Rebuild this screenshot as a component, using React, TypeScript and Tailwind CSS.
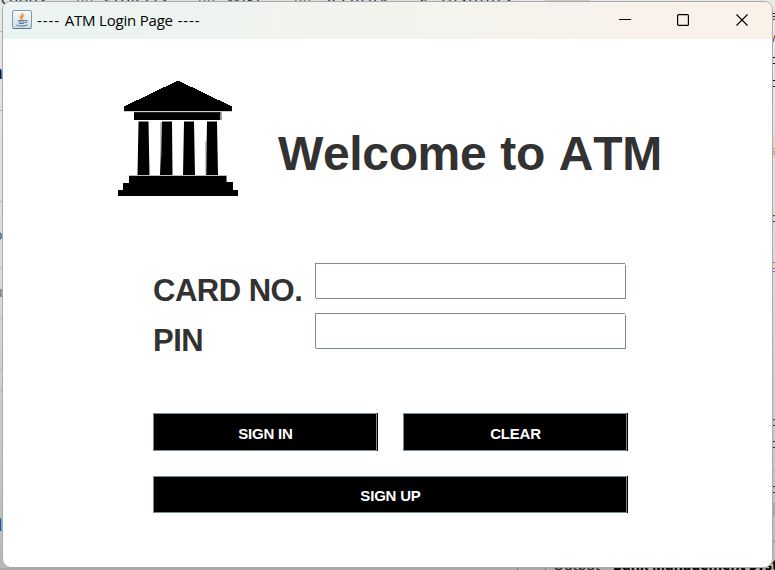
import type { ReactNode } from 'react';

function JavaIcon() {
  return (
    <svg width="20" height="20" viewBox="0 0 20 20" fill="none" className="shrink-0">
      <defs>
        <linearGradient id="tile" x1="0" y1="0" x2="0" y2="1">
          <stop offset="0" stopColor="#fbfcfc" />
          <stop offset="1" stopColor="#cfdae2" />
        </linearGradient>
      </defs>
      <rect x="0.5" y="0.5" width="19" height="18" rx="1.5" fill="url(#tile)" stroke="#7f99ae" />
      <path d="M1 18.5h18" stroke="#58788f" />
      <path d="M10.5 3c1 2-3 3-2 5 .3.7 1 1 1 1.500M12 5.500c-2 1-2.500 2-1.500 3.500" stroke="#ee8f45" strokeWidth="1.500" />
      <path d="M6 10.500h7M6.500 12h6M7 13.500h5M13 10.500c3-.5 2.500 2-.5 2.500M4.500 15c2 1.300 8.500 1.300 11 0" stroke="#5e829f" strokeWidth="1.100" />
    </svg>
  );
}

function BankIcon() {
  return (
    <svg width="120" height="115" viewBox="0 0 120 115" fill="#000">
      <path d="M59 0 6 25.500V30h108v-4.500L61 0Z" shapeRendering="crispEdges" />
      <path d="M6 30h108v.6H6z" fill="#999" />
      <path d="M16 31h87v2H16z" fill="#222" />
      <path d="M16 32h86v7H16z" />
      <path d="M102 31.500h2v7.500h-2z" fill="#999" />
      <path d="M20.500 40.500h10l1 53.500h-12zM44 40.500h10l.5 53.500H42zM66 40.500h10l1 53.500H65zM89 40.500h10l1 53.500H88z" />
      <path d="M42.500 41h1v35h-1zM87.500 60h1v33h-1z" fill="#888" />
      <path d="M11 94h98v1H11z" fill="#bbb" />
      <path d="M11 95h98v6h6v8h5v6H0v-6h5v-7h6z" />
      <path d="M108 95h1v6h-1z" fill="#777" />
    </svg>
  );
}

function Field({ label, type }: { label: string; type: string }) {
  return (
    <label className="flex h-9">
      <span className="w-[162px] pt-2.5 text-[31px] leading-[35px] font-bold tracking-[-0.5px] whitespace-nowrap [font-kerning:none]">{label}</span>
      <span className="relative block h-9 w-[311px]">
        <input type={type} className="block h-9 w-[311px] border border-[#7a8a99] bg-white outline-none" />
        <i className="absolute bottom-0 left-0 h-px w-px bg-[#eef0f2]" />
        <i className="absolute top-0 right-0 h-0.5 w-px bg-[#eef0f2]" />
      </span>
    </label>
  );
}

function Button({ className, label, children }: { className: string; label: string; children: ReactNode }) {
  return (
    <button className={`block border-r border-black bg-black ${className}`}>
      <span className={`flex h-full items-center justify-center border border-[#7a8a99] pl-px text-[15px] leading-4 font-bold tracking-[-0.2px] text-white [font-kerning:none] ${label}`}>
        {children}
      </span>
    </button>
  );
}

const topTabs = [
  { text: 'ctions', x: 'left-[1px]' },
  { text: '▯▯  Projects', x: 'left-[76px]' },
  { text: '▯▯  Wiki', x: 'left-[198px]' },
  { text: '▯▯  Security', x: 'left-[294px]' },
  { text: '⌁  Insights', x: 'left-[418px]' },
];

const tabSpacing = ['tracking-[0.5px]', 'tracking-[1px]', 'tracking-[1.2px]', 'tracking-[1.2px]', 'tracking-[2px]'];

const leftEdge = [
  { text: 'n', x: 'left-[-10px] top-[58px] text-[20px] leading-7 font-bold text-[#171a3a]' },
  { text: 'o', x: 'left-[-6px] top-[227px] text-[14px] leading-4 text-[#44566b]' },
  { text: 'u', x: 'left-[-6px] top-[284px] text-[14px] leading-4 text-[#7b6b72]' },
  { text: 'n', x: 'left-[-14px] top-[507px] text-[26px] leading-7 font-bold text-[#1d4f9f]' },
];

const rightEdge = [
  { text: 'a', x: 'top-[5px] text-[#252432]' },
  { text: 'w', x: 'top-[27px] text-[#58423a]' },
  { text: 'c', x: 'top-[49px] text-[#111]' },
  { text: 'c', x: 'top-[72px] text-[#111]' },
  { text: 's', x: 'top-[140px] text-[#b5a37a]' },
  { text: 'o', x: 'top-[207px] text-[#4a3828]' },
  { text: 'g', x: 'top-[254px] text-[#c252b9]' },
  { text: 'i', x: 'top-[298px] text-[#2b78b5] underline' },
  { text: 'l', x: 'top-[365px] text-[#2b78b5] underline' },
  { text: 'o', x: 'top-[411px] text-[#4a3828]' },
  { text: 'c', x: 'top-[433px] text-[#333]' },
  { text: 'i', x: 'top-[455px] text-[#2b78b5] underline' },
  { text: 'c', x: 'top-[478px] text-[#333]' },
];

const rules = ['top-[31px]', 'top-[110px]', 'top-[201px]', 'top-[267px]', 'top-[318px]', 'top-[369px]', 'top-[390px]', 'top-[450px]', 'top-[554px]'];

function Desktop() {
  return (
    <div className="absolute inset-0 overflow-hidden bg-linear-to-b from-[#e8e8e8] via-[#dadada] to-[#b9b9b9]" aria-hidden="true">
      <div className="absolute top-0 left-0 h-1 w-[517px] bg-[#dce0df]" />
      <div className="absolute top-0 left-[545px] h-1 w-[45px] bg-[#cbcbc3]" />
      {topTabs.map((t, i) => (
        <span key={t.text} className={`absolute top-[-10px] text-[15px] leading-4 whitespace-pre text-[#1f2938] ${t.x} ${tabSpacing[i]}`}>{t.text}</span>
      ))}
      {rules.map((r) => <i key={r} className={`absolute left-0 h-px w-[3px] bg-[#b5b7b8] ${r}`} />)}
      {leftEdge.map((t) => <span key={t.x} className={`absolute ${t.x}`}>{t.text}</span>)}
      <div className="absolute top-[136px] right-0 h-[22px] w-1 bg-[#ddd7c1]" />
      {rightEdge.map((t) => <span key={t.x} className={`absolute left-[770px] text-[13px] leading-5 ${t.x}`}>{t.text}</span>)}
      <div className="absolute top-[503px] right-0 h-[14px] w-1 bg-[#aaa]" />
      <i className="absolute top-[541px] right-0 h-px w-1 bg-[#888]" />
      <div className="absolute bottom-0 left-0 h-0.5 w-full bg-[#aaa]" />
      <i className="absolute bottom-0 left-[517px] h-[3px] w-px bg-[#777]" />
      <i className="absolute bottom-0 left-[545px] h-[3px] w-px bg-[#777]" />
      <span className="absolute top-[557px] left-[553px] text-[14px] leading-4 text-[#222]">Output</span>
      <span className="absolute top-[557px] left-[613px] text-[14px] leading-4 font-bold whitespace-nowrap text-black">Bank Management System</span>
    </div>
  );
}

export default function App() {
  return (
    <div className="relative h-[570px] w-[775px] overflow-hidden font-['Noto_Sans',sans-serif]">
      <Desktop />
      <main className="absolute top-px left-[2px] flex h-[567px] w-[771px] flex-col overflow-hidden rounded-[9px] border border-[#aaa] bg-white">
        <header className="flex h-[37px] shrink-0 bg-linear-to-r from-[#eaf4f1] via-[#f2f3ee] via-45% to-[#faf1e9]">
          <div className="flex flex-1 pt-2 pl-[9px]">
            <JavaIcon />
            <h1 className="ml-[5px] font-['Open_Sans',sans-serif] text-[15px] leading-5 tracking-[-0.2px] whitespace-nowrap text-black">
              <span className="tracking-[0.9px]">---- </span>ATM Login Page<span className="tracking-[0.9px]"> ----</span>
            </h1>
          </div>
          <nav className="flex">
            <button aria-label="Minimize" className="flex w-[58px] justify-center pt-3">
              <svg width="12" height="12"><path d="M0 5.500h12" stroke="#000" /></svg>
            </button>
            <button aria-label="Maximize" className="flex w-[58px] justify-center pt-3">
              <svg width="12" height="12"><rect x=".6" y=".6" width="10.800" height="10.800" rx="1" fill="none" stroke="#000" strokeWidth="1.200" /></svg>
            </button>
            <button aria-label="Close" className="flex w-[60px] justify-center pt-3">
              <svg width="12" height="12"><path d="m.5.5 11 11m0-11-11 11" stroke="#000" strokeWidth="1.100" /></svg>
            </button>
          </nav>
        </header>
        <section className="flex-1 pt-[42px] font-['Liberation_Sans',Arial,sans-serif] text-[#323232]">
          <div className="flex h-[115px] pl-[115px]">
            <BankIcon />
            <h2 className="ml-10 pt-[45px] text-[48px] leading-[55px] font-bold tracking-[-0.35px] [word-spacing:1px] whitespace-nowrap [font-kerning:none]">Welcome to ATM</h2>
          </div>
          <form className="ml-[150px] pt-[67px]" onSubmit={(e) => e.preventDefault()}>
            <div className="flex flex-col gap-3.5">
              <Field label="CARD NO." type="text" />
              <Field label="PIN" type="password" />
            </div>
            <div className="mt-16 flex gap-[25px]">
              <Button className="h-[38px] w-[225px]" label="pt-1">SIGN IN</Button>
              <Button className="h-[38px] w-[225px]" label="pt-1">CLEAR</Button>
            </div>
            <Button className="mt-[25px] h-[37px] w-[475px]" label="pt-0.5">SIGN UP</Button>
          </form>
        </section>
      </main>
    </div>
  );
}
